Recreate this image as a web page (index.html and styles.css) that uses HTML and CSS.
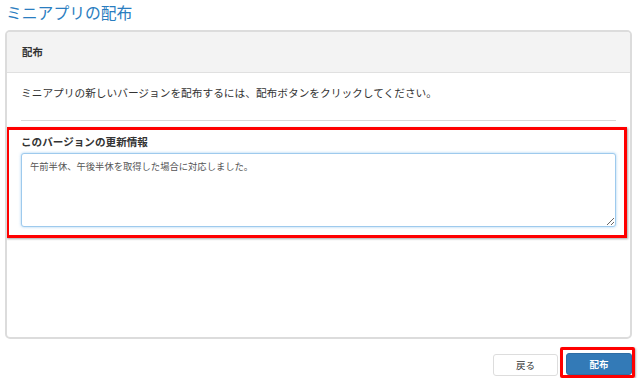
FILE: index.html
```html
<!DOCTYPE html>
<html lang="ja">
<head>
  <meta charset="UTF-8">
  <title>ミニアプリの配布</title>
  <link rel="stylesheet" href="styles.css">
</head>
<body>
  <h1 class="page-title">ミニアプリの配布</h1>
  <div class="panel">
    <div class="panel-heading">配布</div>
    <div class="panel-body">
      <p class="lead">ミニアプリの新しいバージョンを配布するには、配布ボタンをクリックしてください。</p>
      <hr class="divider">
      <div class="form-group highlight">
        <label class="field-label" for="notes">このバージョンの更新情報</label>
        <textarea id="notes" class="notes">午前半休、午後半休を取得した場合に対応しました。</textarea>
      </div>
    </div>
  </div>
  <div class="actions">
    <button class="btn btn-default">戻る</button>
    <div class="highlight-btn">
      <button class="btn btn-primary">配布</button>
    </div>
  </div>
</body>
</html>
```

FILE: styles.css
```css
html, body {
  margin: 0;
  padding: 0;
  background: #fff;
  font-family: "Noto Sans CJK JP", "Noto Sans", sans-serif;
  color: #333;
}
.page-title {
  margin: 0;
  padding: 0 6px;
  height: 30px;
  line-height: 25px;
  font-size: 15.8px;
  font-weight: normal;
  color: #2a7dc0;
}
.panel {
  box-sizing: border-box;
  margin-left: 5px;
  width: 627px;
  height: 309px;
  border: 2px solid #dcdcdc;
  border-radius: 5px;
  overflow: hidden;
}
.panel-heading {
  height: 40px;
  line-height: 40px;
  padding-left: 15px;
  background: #f3f3f3;
  border-bottom: 1px solid #e0e0e0;
  font-size: 10.4px;
  font-weight: bold;
}
.panel-body {
  padding: 12px 14px 0;
}
.lead {
  margin: 0 0 19px;
  font-size: 10.7px;
  line-height: 16px;
}
.divider {
  margin: 0 0 6px;
  border: 0;
  border-top: 1px solid #d8d8d8;
}
.highlight {
  margin: 0 -11px 0 -15px;
  padding: 4px 8px 8px 12px;
  border: 3px solid #f00;
  box-shadow: 1px 1px 2px rgba(0, 0, 0, 0.35);
}
.field-label {
  display: block;
  margin-bottom: 3px;
  font-size: 10.6px;
  line-height: 16px;
  font-weight: bold;
}
.notes {
  box-sizing: border-box;
  display: block;
  width: 100%;
  height: 74px;
  margin: 0;
  padding: 5px 8px;
  border: 1px solid #9ecaed;
  border-radius: 3px;
  box-shadow: 0 0 3px rgba(102, 175, 233, 0.6);
  font-family: inherit;
  font-size: 9.3px;
  line-height: 14px;
  color: #555;
}
.actions {
  display: flex;
  justify-content: flex-end;
  align-items: flex-start;
  gap: 2px;
  margin: 8px 5px 0 0;
}
.btn {
  box-sizing: border-box;
  height: 22px;
  padding: 0;
  border-radius: 3px;
  font-family: inherit;
  font-size: 9.5px;
  cursor: pointer;
}
.btn-default {
  width: 65px;
  margin-top: 7px;
  background: #fff;
  border: 1px solid #ddd;
  color: #333;
}
.highlight-btn {
  padding: 3px 0 0 3px;
  border: 3px solid #f00;
  box-shadow: 1px 1px 2px rgba(0, 0, 0, 0.3);
  border-radius: 2px;
}
.btn-primary {
  display: block;
  width: 66px;
  background: #337ab7;
  border: 1px solid #2e6da4;
  color: #fff;
  font-weight: bold;
}
```
